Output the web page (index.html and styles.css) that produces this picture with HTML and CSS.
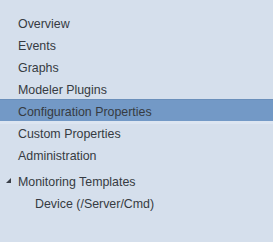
FILE: index.html
```html
<!DOCTYPE html>
<html lang="en">
<head>
    <meta charset="UTF-8">
    <title>Device Navigation</title>
    <link rel="stylesheet" href="styles.css">
</head>
<body>
    <ul class="nav-list">
        <li class="nav-item">Overview</li>
        <li class="nav-item">Events</li>
        <li class="nav-item">Graphs</li>
        <li class="nav-item">Modeler Plugins</li>
        <li class="nav-item selected">Configuration Properties</li>
        <li class="nav-item">Custom Properties</li>
        <li class="nav-item">Administration</li>
    </ul>

    <!-- Templates tree -->
    <div class="tree">
        <div class="tree-node">
            <span class="tree-arrow"></span>
            Monitoring Templates
        </div>
        <div class="tree-child">Device (/Server/Cmd)</div>
    </div>
</body>
</html>
```

FILE: styles.css
```css
body {
    margin: 0;
    padding-top: 11px;
    background-color: #d5dfec;
    font-family: "Liberation Sans", Arial, sans-serif;
    font-size: 12.4px;
    color: #363b42;
    height: 242px;
    box-sizing: border-box;
}
.nav-list {
    list-style: none;
    margin: 0;
    padding: 0;
}
.nav-item {
    height: 22px;
    line-height: 26px;
    padding-left: 18px;
    box-sizing: border-box;
    overflow: hidden;
}
.nav-item.selected {
    background-color: #7399c6;
    border-top: 1px solid #6a8fbb;
    line-height: 24px;
    box-shadow: 0 3px 0 #dce5f1;
}
.tree {
    margin-top: 5px;
}
.tree-node {
    position: relative;
    height: 22px;
    line-height: 24px;
    padding-left: 18px;
}
.tree-arrow {
    position: absolute;
    left: 6px;
    top: 8px;
    width: 0;
    height: 0;
    border-left: 5px solid transparent;
    border-bottom: 5px solid #3a3f47;
}
.tree-child {
    height: 22px;
    line-height: 24px;
    padding-left: 35px;
}
```
